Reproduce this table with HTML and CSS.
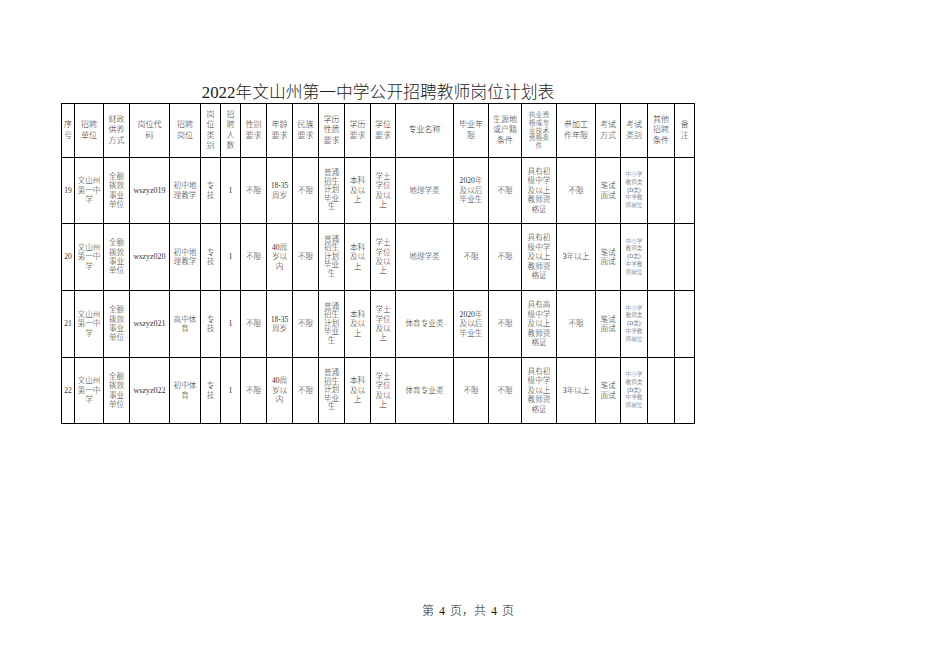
FILE: index.html
```html
<!DOCTYPE html>
<html lang="zh">
<head>
<meta charset="utf-8">
<title>2022年文山州第一中学公开招聘教师岗位计划表</title>
<link rel="stylesheet" href="styles.css">
</head>
<body>
<div class="page">
  <div class="sheet">
    <h1 class="title">2022年文山州第一中学公开招聘教师岗位计划表</h1>
    <table class="plan">
      <colgroup>
        <col style="width:13px"><col style="width:29px"><col style="width:26px"><col style="width:40px">
        <col style="width:31px"><col style="width:20px"><col style="width:20px"><col style="width:26px">
        <col style="width:26px"><col style="width:26px"><col style="width:26px"><col style="width:26px">
        <col style="width:25px"><col style="width:58px"><col style="width:35px"><col style="width:33px">
        <col style="width:35px"><col style="width:39px"><col style="width:25px"><col style="width:27px">
        <col style="width:27px"><col style="width:20px">
      </colgroup>
      <thead>
        <tr class="head">
          <th>序<br>号</th>
          <th>招聘<br>单位</th>
          <th>财政<br>供养<br>方式</th>
          <th>岗位代<br>码</th>
          <th>招聘<br>岗位</th>
          <th>岗<br>位<br>类<br>别</th>
          <th>招<br>聘<br>人<br>数</th>
          <th>性别<br>要求</th>
          <th>年龄<br>要求</th>
          <th>民族<br>要求</th>
          <th>学历<br>性质<br>要求</th>
          <th>学历<br>要求</th>
          <th>学位<br>要求</th>
          <th>专业名称</th>
          <th>毕业年<br>限</th>
          <th>生源地<br>或户籍<br>条件</th>
          <th class="tight">执业资<br>格或专<br>业技术<br>资格条<br>件</th>
          <th>参加工<br>作年限</th>
          <th>考试<br>方式</th>
          <th>考试<br>类别</th>
          <th>其他<br>招聘<br>条件</th>
          <th>备<br>注</th>
        </tr>
      </thead>
      <tbody>
        <tr class="r66">
          <td>19</td>
          <td>文山州<br>第一中<br>学</td>
          <td>全额<br>拨款<br>事业<br>单位</td>
          <td class="latin">wszyz019</td>
          <td>初中地<br>理教学</td>
          <td>专<br>技</td>
          <td class="latin">1</td>
          <td>不限</td>
          <td><span class="latin">18-35</span><br>周岁</td>
          <td>不限</td>
          <td class="dense">普通<br>招生<br>计划<br>毕业<br>生</td>
          <td>本科<br>及以<br>上</td>
          <td>学士<br>学位<br>及以<br>上</td>
          <td>地理学类</td>
          <td><span class="latin">2020</span>年<br>及以后<br>毕业生</td>
          <td>不限</td>
          <td>具有初<br>级中学<br>及以上<br>教师资<br>格证</td>
          <td>不限</td>
          <td>笔试<br>面试</td>
          <td class="tiny">中小学<br>教师类<br>(D类)<br>中学教<br>师岗位</td>
          <td></td>
          <td></td>
        </tr>
        <tr class="r67">
          <td>20</td>
          <td>文山州<br>第一中<br>学</td>
          <td>全额<br>拨款<br>事业<br>单位</td>
          <td class="latin">wszyz020</td>
          <td>初中地<br>理教学</td>
          <td>专<br>技</td>
          <td class="latin">1</td>
          <td>不限</td>
          <td><span class="latin">40</span>周<br>岁以<br>内</td>
          <td>不限</td>
          <td class="dense">普通<br>招生<br>计划<br>毕业<br>生</td>
          <td>本科<br>及以<br>上</td>
          <td>学士<br>学位<br>及以<br>上</td>
          <td>地理学类</td>
          <td>不限</td>
          <td>不限</td>
          <td>具有初<br>级中学<br>及以上<br>教师资<br>格证</td>
          <td><span class="latin">3</span>年以上</td>
          <td>笔试<br>面试</td>
          <td class="tiny">中小学<br>教师类<br>(D类)<br>中学教<br>师岗位</td>
          <td></td>
          <td></td>
        </tr>
        <tr class="r67">
          <td>21</td>
          <td>文山州<br>第一中<br>学</td>
          <td>全额<br>拨款<br>事业<br>单位</td>
          <td class="latin">wszyz021</td>
          <td>高中体<br>育</td>
          <td>专<br>技</td>
          <td class="latin">1</td>
          <td>不限</td>
          <td><span class="latin">18-35</span><br>周岁</td>
          <td>不限</td>
          <td class="dense">普通<br>招生<br>计划<br>毕业<br>生</td>
          <td>本科<br>及以<br>上</td>
          <td>学士<br>学位<br>及以<br>上</td>
          <td>体育专业类</td>
          <td><span class="latin">2020</span>年<br>及以后<br>毕业生</td>
          <td>不限</td>
          <td>具有高<br>级中学<br>及以上<br>教师资<br>格证</td>
          <td>不限</td>
          <td>笔试<br>面试</td>
          <td class="tiny">中小学<br>教师类<br>(D类)<br>中学教<br>师岗位</td>
          <td></td>
          <td></td>
        </tr>
        <tr class="r66">
          <td>22</td>
          <td>文山州<br>第一中<br>学</td>
          <td>全额<br>拨款<br>事业<br>单位</td>
          <td class="latin">wszyz022</td>
          <td>初中体<br>育</td>
          <td>专<br>技</td>
          <td class="latin">1</td>
          <td>不限</td>
          <td><span class="latin">40</span>周<br>岁以<br>内</td>
          <td>不限</td>
          <td class="dense">普通<br>招生<br>计划<br>毕业<br>生</td>
          <td>本科<br>及以<br>上</td>
          <td>学士<br>学位<br>及以<br>上</td>
          <td>体育专业类</td>
          <td>不限</td>
          <td>不限</td>
          <td>具有初<br>级中学<br>及以上<br>教师资<br>格证</td>
          <td><span class="latin">3</span>年以上</td>
          <td>笔试<br>面试</td>
          <td class="tiny">中小学<br>教师类<br>(D类)<br>中学教<br>师岗位</td>
          <td></td>
          <td></td>
        </tr>
      </tbody>
    </table>
  </div>
  <div class="footer">第 4 页，共 4 页</div>
</div>
</body>
</html>
```

FILE: styles.css
```css
html, body {
  margin: 0;
  padding: 0;
  background: #ffffff;
}

body {
  font-family: "Liberation Serif", "Noto Sans CJK SC", serif;
  font-weight: 300;
  color: #333333;
}

.page {
  width: 936px;
  height: 662px;
  padding-top: 83px;
  box-sizing: border-box;
}

.sheet {
  margin-left: 61px;
  width: 634px;
}

.title {
  margin: 0;
  height: 20px;
  font-size: 16.8px;
  line-height: 20px;
  font-weight: 300;
  text-align: center;
  color: #1a1a1a;
}

.plan {
  border-collapse: collapse;
  table-layout: fixed;
  width: 634px;
}

.plan th,
.plan td {
  border: 1px solid #000000;
  padding: 0;
  text-align: center;
  vertical-align: middle;
  font-weight: 300;
  font-size: 7.6px;
  line-height: 9.4px;
  overflow: hidden;
  white-space: nowrap;
}

.plan th {
  font-size: 8px;
  line-height: 10.4px;
}

.plan th.tight {
  font-size: 6.8px;
  line-height: 7.9px;
}

.head {
  height: 54px;
}

.r66 {
  height: 66px;
}

.r67 {
  height: 67px;
}

.plan td.dense {
  line-height: 8.6px;
}

.plan td.tiny {
  font-size: 5.6px;
  line-height: 7.7px;
  color: #555555;
}

.latin {
  font-family: "Liberation Serif", serif;
}

.plan td.latin {
  font-size: 8px;
}

.footer {
  margin-top: 180px;
  text-align: center;
  font-size: 12px;
  line-height: 14px;
  word-spacing: 2px;
  color: #1a1a1a;
}
```
